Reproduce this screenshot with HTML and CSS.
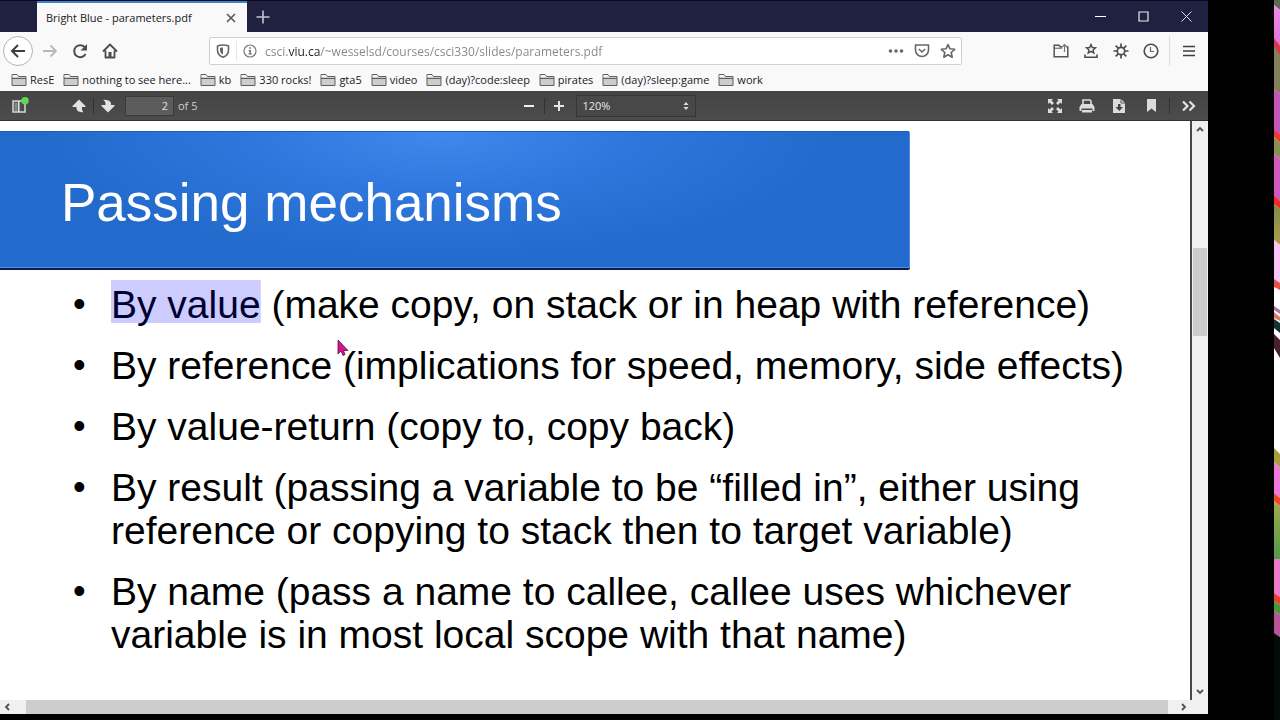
FILE: index.html
```html
<!DOCTYPE html>
<html lang="en">
<head>
  <meta charset="UTF-8">
  <meta name="viewport" content="width=device-width, initial-scale=1">
  <title>Bright Blue - parameters.pdf</title>
  <link rel="stylesheet" href="styles.css">
</head>
<body>
  <!-- Shared icons -->
  <svg class="sprite" width="0" height="0">
    <symbol id="folder" viewBox="0 0 16 14">
      <path d="M1 12.5V1.5h5l1.5 2H15v9z" fill="#cdcdcd" stroke="#5f5f61"/>
      <path d="M1.5 2h4.3l1.4 2H1.5z" fill="#f4f4f4"/>
      <path d="M1 5.5h14" stroke="#5f5f61"/>
    </symbol>
  </svg>

  <div class="window">
    <header class="titlebar">
      <div class="tab">
        <span class="tab-title">Bright Blue - parameters.pdf</span>
        <button class="tab-close" aria-label="Close tab">
          <svg width="10" height="10" viewBox="0 0 10 10"><path d="M1 1l8 8M9 1l-8 8" stroke="#58585a" stroke-width="1.6"/></svg>
        </button>
      </div>
      <button class="new-tab" aria-label="New tab">
        <svg width="14" height="14" viewBox="0 0 14 14"><path d="M7 .5v13M.5 7h13" stroke="#c4c3d4" stroke-width="1.6"/></svg>
      </button>
      <div class="window-buttons">
        <button aria-label="Minimize"><svg width="11" height="11" viewBox="0 0 11 11"><path d="M0 5.5h11" stroke="#fff"/></svg></button>
        <button aria-label="Maximize"><svg width="11" height="11" viewBox="0 0 11 11"><path d="M1 1h9v9H1z" fill="none" stroke="#eceaf5" stroke-width="1.2"/></svg></button>
        <button aria-label="Close"><svg width="11" height="11" viewBox="0 0 11 11"><path d="M.5 .5l10 10M10.500 .5l-10 10" stroke="#dcdbe8"/></svg></button>
      </div>
    </header>

    <nav class="navbar">
      <button class="nav-btn back" aria-label="Back">
        <svg width="16" height="16" viewBox="0 0 16 16"><path d="M15 8H2M8 2L2 8l6 6" fill="none" stroke="#3e3e40" stroke-width="2"/></svg>
      </button>
      <button class="nav-btn forward" aria-label="Forward">
        <svg width="16" height="16" viewBox="0 0 16 16"><path d="M1 8h13M8.500 2.500L14 8l-5.500 5.500" fill="none" stroke="#b8b8b9" stroke-width="1.800"/></svg>
      </button>
      <button class="nav-btn" aria-label="Reload">
        <svg width="16" height="16" viewBox="0 0 16 16"><path d="M13 4.500A6 6 0 1 0 13.500 11" fill="none" stroke="#4c4c4e" stroke-width="2"/><path d="M15 1v6.500H8.500z" fill="#4c4c4e"/></svg>
      </button>
      <button class="nav-btn" aria-label="Home">
        <svg width="16" height="16" viewBox="0 0 16 16"><path d="M1 8.500L8 1.500l7 7M3.500 7.500v7h9v-7" fill="none" stroke="#4c4c4e" stroke-width="1.800" stroke-linejoin="round"/><path d="M6.500 9h3v5.500h-3z" fill="#4c4c4e"/></svg>
      </button>

      <div class="urlbar">
        <svg width="14" height="14" viewBox="0 0 14 14"><path d="M7 1c2 0 4 .3 5.500 1v4c0 3.500-2 6-5.500 7.200C3.500 12 1.500 9.500 1.500 6V2C3 1.300 5 1 7 1z" fill="none" stroke="#666" stroke-width="1.600"/><path d="M7 3.500v7C5 9.500 4 8 4 6V4c1-.4 2-.5 3-.5z" fill="#666"/></svg>
        <span class="url-divider"></span>
        <svg width="14" height="14" viewBox="0 0 14 14"><circle cx="7" cy="7" r="6" fill="none" stroke="#777" stroke-width="1.200"/><path d="M6.200 3.200h1.800v1.600H6.200zM5.500 6h2.500v3.500h1v1H5.300v-1h1V7h-.8z" fill="#777"/></svg>
        <input class="url" type="text" aria-label="Address" value="csci.viu.ca/~wesselsd/courses/csci330/slides/parameters.pdf">
        <button aria-label="Page actions"><svg width="16" height="16" viewBox="0 0 16 16"><circle cx="2.500" cy="8" r="1.800" fill="#666"/><circle cx="8" cy="8" r="1.800" fill="#666"/><circle cx="13.500" cy="8" r="1.800" fill="#666"/></svg></button>
        <button aria-label="Save to Pocket"><svg width="16" height="16" viewBox="0 0 16 16"><path d="M1.500 2h13v5a6.500 6.500 0 0 1-13 0z" fill="none" stroke="#666" stroke-width="1.600" stroke-linejoin="round"/><path d="M4.800 6L8 9l3.200-3" fill="none" stroke="#666" stroke-width="1.600"/></svg></button>
        <button aria-label="Bookmark this page"><svg width="16" height="16" viewBox="0 0 16 16"><path d="M8 1.500l2 4.300 4.700.5-3.500 3.200 1 4.700L8 11.800l-4.200 2.400 1-4.700L1.300 6.300 6 5.800z" fill="none" stroke="#666" stroke-width="1.600" stroke-linejoin="round"/></svg></button>
      </div>

      <button class="nav-btn" aria-label="Open file">
        <svg width="16" height="16" viewBox="0 0 16 16"><path d="M9 4H7.500L6 2.200H1.200v11.600h13.600V4H13.500" fill="none" stroke="#555" stroke-width="1.500"/><path d="M1 5.200h8" stroke="#555"/><path d="M11.500 9V1.500M9 4l2.500-2.500L14 4" fill="none" stroke="#777" stroke-width="1.200"/></svg>
      </button>
      <button class="nav-btn" aria-label="Bookmarks menu">
        <svg width="16" height="16" viewBox="0 0 16 16"><path d="M8 1.500l1.300 3 3.200.3-2.400 2.100.7 3.100L8 8.400 5.200 10l.7-3.100-2.400-2.100 3.200-.3z" fill="none" stroke="#4c4c4e" stroke-width="1.400"/><path d="M2 11.500v2.800h12v-2.800" fill="none" stroke="#4c4c4e" stroke-width="1.600"/></svg>
      </button>
      <button class="nav-btn" aria-label="Options">
        <svg width="16" height="16" viewBox="0 0 16 16"><circle cx="8" cy="8" r="3.700" fill="none" stroke="#4c4c4e" stroke-width="1.700"/><path d="M8 .5v3.500M8 12v3.500M.5 8H4M12 8h3.500M2.700 2.700l2.500 2.500M10.800 10.800l2.500 2.500M2.700 13.300l2.500-2.500M10.800 5.200l2.500-2.500" stroke="#4c4c4e" stroke-width="1.700"/></svg>
      </button>
      <button class="nav-btn" aria-label="History">
        <svg width="16" height="16" viewBox="0 0 16 16"><circle cx="8" cy="8" r="6.800" fill="none" stroke="#4c4c4e" stroke-width="1.600"/><path d="M7.500 4v4.500H11" fill="none" stroke="#666" stroke-width="1.200"/></svg>
      </button>
      <span class="nav-divider"></span>
      <button class="nav-btn" aria-label="Menu">
        <svg width="12" height="12" viewBox="0 0 12 12"><path d="M0 1.500h12M0 6h12M0 10.500h12" stroke="#3e3e40" stroke-width="1.500"/></svg>
      </button>
    </nav>

    <nav class="bookmarks">
      <a href="#"><svg class="folder"><use href="#folder"/></svg>ResE</a>
      <a href="#"><svg class="folder"><use href="#folder"/></svg>nothing to see here...</a>
      <a href="#"><svg class="folder"><use href="#folder"/></svg>kb</a>
      <a href="#"><svg class="folder"><use href="#folder"/></svg>330 rocks!</a>
      <a href="#"><svg class="folder"><use href="#folder"/></svg>gta5</a>
      <a href="#"><svg class="folder"><use href="#folder"/></svg>video</a>
      <a href="#"><svg class="folder"><use href="#folder"/></svg>(day)?code:sleep</a>
      <a href="#"><svg class="folder"><use href="#folder"/></svg>pirates</a>
      <a href="#"><svg class="folder"><use href="#folder"/></svg>(day)?sleep:game</a>
      <a href="#"><svg class="folder"><use href="#folder"/></svg>work</a>
    </nav>

    <!-- PDF viewer toolbar -->
    <div class="pdfbar">
      <div class="pdf-left">
        <button class="sidebar-toggle" aria-label="Toggle sidebar">
          <svg width="18" height="18" viewBox="0 0 18 18"><path d="M2 4h12v11H2z" fill="none" stroke="#d8d8d8" stroke-width="1.500"/><path d="M3.500 5.500h3v8.500h-3z" fill="#8c8c8c"/><path d="M7.800 4v11" stroke="#e8e8e8" stroke-width="1.500"/><circle cx="14" cy="3.800" r="3.800" fill="#5fd94f"/></svg>
        </button>
        <button aria-label="Previous page">
          <svg width="14" height="14" viewBox="0 0 14 14"><path d="M7 .5L13.500 7v1H10v2q0 2 1.500 3.200Q5 13.500 4.500 9.500V8H.5V7z" fill="#e2e2e2"/></svg>
        </button>
        <span class="pdf-divider"></span>
        <button aria-label="Next page">
          <svg width="14" height="14" viewBox="0 0 14 14"><path d="M7 13.500L.5 7V6H4.500V4.500Q4.500 2 2 .8 9.500 .5 10 4.500V6h3.500v1z" fill="#e2e2e2"/></svg>
        </button>
        <input class="page-number" type="text" id="pageNumber" value="2">
        <label class="page-count" for="pageNumber">of 5</label>
      </div>
      <div class="pdf-middle">
        <button class="zoom-out" aria-label="Zoom out">
          <svg width="10" height="10" viewBox="0 0 10 10"><path d="M0 5h10" stroke="#f0f0f0" stroke-width="2"/></svg>
        </button>
        <span class="pdf-divider"></span>
        <button aria-label="Zoom in">
          <svg width="10" height="10" viewBox="0 0 10 10"><path d="M0 5h10M5 0v10" stroke="#e6e6e6" stroke-width="2"/></svg>
        </button>
        <div class="scale">
          <select aria-label="Zoom">
            <option>120%</option>
          </select>
          <svg width="6" height="10" viewBox="0 0 6 10"><path d="M3 1l2.500 3h-5zM3 9L.5 6h5z" fill="#e0e0e0"/></svg>
        </div>
      </div>
      <div class="pdf-right">
        <button aria-label="Presentation mode">
          <svg width="14" height="14" viewBox="0 0 14 14"><path d="M0 0h5L3.500 1.500l2.500 2.500-2 2L1.500 3.500 0 5zM14 0v5l-1.500-1.500L10 6 8 4l2.500-2.500L9 0zM0 14V9l1.500 1.500L4 8l2 2-2.500 2.500L5 14zM14 14H9l1.500-1.500L8 10l2-2 2.500 2.500L14 9z" fill="#dcdcdc"/></svg>
        </button>
        <button aria-label="Print">
          <svg width="16" height="14" viewBox="0 0 16 14"><path d="M4 5V1h7l1 1v3" fill="none" stroke="#dcdcdc" stroke-width="1.600"/><path d="M2.500 5h11L15.500 8v4h-2V9.500h-11V12h-2V8z" fill="#dcdcdc"/><path d="M3 11h10v2.500H3z" fill="#dcdcdc"/></svg>
        </button>
        <button aria-label="Download">
          <svg width="12" height="14" viewBox="0 0 12 14"><path d="M0 0h8l4 4v10H0z" fill="#dcdcdc"/><path d="M8 0v4h4" fill="none" stroke="#555"/><path d="M5 5h2.500v3H10l-3.700 4L2.500 8H5z" fill="#444"/></svg>
        </button>
        <button aria-label="Bookmark view">
          <svg width="9" height="13" viewBox="0 0 9 13"><path d="M0 0h9v13L4.500 9.500 0 13z" fill="#dcdcdc"/></svg>
        </button>
        <span class="pdf-divider"></span>
        <button class="tools" aria-label="Tools">
          <svg width="14" height="12" viewBox="0 0 14 12"><path d="M1 1.500L5.500 6 1 10.500M7.500 1.500L12 6l-4.500 4.500" fill="none" stroke="#e2e2e2" stroke-width="2.200"/></svg>
        </button>
      </div>
    </div>

    <div class="viewer">
      <div class="viewer-main">
        <main class="slide">
          <h1>Passing mechanisms</h1>
          <ul>
            <li><mark>By value</mark> (make copy, on stack or in heap with reference)</li>
            <li>By reference (implications for speed, memory, side effects)</li>
            <li>By value-return (copy to, copy back)</li>
            <li>By result (passing a variable to be “filled in”, either using reference or copying to stack then to target variable)</li>
            <li>By name (pass a name to callee, callee uses whichever variable is in most local scope with that name)</li>
          </ul>
          <svg class="cursor" width="12" height="18" viewBox="0 0 12 18"><path d="M1 1v14l3-3 2 4.500 2-1L6.500 11.500H11z" fill="#d4148c" stroke="#5c1040" stroke-width=".8"/></svg>
        </main>
        <div class="scroll-y">
          <svg width="8" height="6" viewBox="0 0 8 6"><path d="M1 5l3-3 3 3" fill="none" stroke="#505050" stroke-width="1.800"/></svg>
          <div class="track-y"><div class="thumb-y"></div></div>
          <svg width="8" height="6" viewBox="0 0 8 6"><path d="M1 1l3 3 3-3" fill="none" stroke="#505050" stroke-width="1.800"/></svg>
        </div>
      </div>
      <div class="scroll-x">
        <svg width="6" height="8" viewBox="0 0 6 8"><path d="M5 1L2 4l3 3" fill="none" stroke="#505050" stroke-width="1.800"/></svg>
        <div class="thumb-x"></div>
        <svg width="6" height="8" viewBox="0 0 6 8"><path d="M1 1l3 3-3 3" fill="none" stroke="#505050" stroke-width="1.800"/></svg>
      </div>
    </div>
  </div>

  <!-- Sliver of desktop wallpaper -->
  <svg class="wallpaper" viewBox="0 0 6 720" preserveAspectRatio="none">
    <defs>
      <linearGradient id="pink" x1="0" y1="0" x2="0" y2="1"><stop offset="0" stop-color="#ef8cec"/><stop offset="1" stop-color="#dd70d8"/></linearGradient>
      <linearGradient id="olive" x1="0" y1="0" x2="0" y2="1"><stop offset="0" stop-color="#7c8c4c"/><stop offset="1" stop-color="#b09c48"/></linearGradient>
      <linearGradient id="green" x1="0" y1="0" x2="0" y2="1"><stop offset="0" stop-color="#a4a850"/><stop offset="1" stop-color="#509a48"/></linearGradient>
    </defs>
    <path d="M0 0h6v720H0z" fill="#fff"/>
    <path d="M0 0h6v10L0 5z" fill="#5c6c4c"/>
    <path d="M0 5l6 5v42l-6-8z" fill="url(#pink)"/>
    <path d="M0 38l6 8v11l-6-7z" fill="#d83848"/>
    <path d="M0 46l6 9v39l-6-5z" fill="#84805a"/>
    <path d="M0 89l6 5v44l-6-7z" fill="#c456b8"/>
    <path d="M0 130l6 5v8l-6-6z" fill="#ee3a26"/>
    <path d="M0 137l6 6v16l-6-5z" fill="#869050"/>
    <path d="M0 154l6 5v42l-6-4z" fill="#d058c0"/>
    <path d="M0 196l6 5v8l-6-5z" fill="#f02c1c"/>
    <path d="M0 204l6 5v36l-6-5z" fill="url(#olive)"/>
    <path d="M0 240l6 5v38l-6-4z" fill="#fbc4f6"/>
    <path d="M0 279l6 4v7l-6-3z" fill="#e85440"/>
    <path d="M0 306l6 4v4l-6-4z" fill="#ac78ae"/>
    <path d="M0 312l6 5v4l-6-3z" fill="#e07c60"/>
    <path d="M0 319l6 4v10l-6-5z" fill="#183038"/>
    <path d="M0 334l6 6v18l-6-10z" fill="#482030"/>
    <path d="M0 448l6 6v14l-6-6z" fill="#ac9c3c"/>
    <path d="M0 462l6 6v30l-6-5z" fill="#ee7adc"/>
    <path d="M0 493l6 5v8l-6-5z" fill="#f04424"/>
    <path d="M0 501l6 5v53H0z" fill="url(#green)"/>
    <path d="M0 559h6v38l-6-4z" fill="#ee7acc"/>
    <path d="M0 593l6 4v8l-6-4z" fill="#ee3e2c"/>
    <path d="M0 601l6 4v10l-6-4z" fill="#48983c"/>
    <path d="M0 611l6 4v22l-6-4z" fill="#b85498"/>
    <path d="M0 633l6 4v83H0z" fill="#050c08"/>
  </svg>
</body>
</html>
```
FILE: styles.css
```css
/* Reset & Basic Styling */
* {
  box-sizing: border-box;
  margin: 0;
  padding: 0;
}
body {
  font-family: "Open Sans", "Noto Sans", sans-serif;
  font-size: 11px;
  background: #000;
  display: flex;
  gap: 66px;
  height: 100vh;
  overflow: hidden;
}
.sprite {
  position: absolute;
}
button {
  display: flex;
  align-items: center;
  justify-content: center;
  background: none;
  border: none;
}
.window {
  flex: 1;
  min-width: 0;
  display: flex;
  flex-direction: column;
  padding-bottom: 6px;
}
.wallpaper {
  width: 6px;
  height: 100%;
}

/* Title bar */
.titlebar {
  display: flex;
  height: 32px;
  padding-left: 37px;
  background: #202040;
  border-top: 1px solid #080820;
}
.tab {
  display: flex;
  align-items: center;
  width: 210px;
  padding: 0 9px;
  background: #f9f9fa;
  border-top: 2px solid #3c84cc;
  color: #202022;
}
.tab-title {
  flex: 1;
  white-space: nowrap;
}
.tab-close {
  width: 14px;
  height: 14px;
}
.new-tab {
  width: 32px;
}
.window-buttons {
  display: flex;
  margin-left: auto;
}
.window-buttons button {
  width: 43px;
}

/* Navigation bar */
.navbar {
  display: flex;
  align-items: center;
  height: 38px;
  padding: 0 4px 0 3px;
  background: #f9f9fa;
}
.nav-btn {
  width: 30px;
  height: 30px;
}
.back {
  margin-right: 2px;
  border: 1px solid #b4b4b5;
  border-radius: 50%;
  background: #fff;
}
.urlbar {
  flex: 1;
  display: flex;
  align-items: center;
  height: 28px;
  margin: 0 84px;
  padding: 0 0 0 6px;
  border: 1px solid #cfcfcf;
  border-radius: 2px;
  background: #fff;
}
.url-divider {
  width: 1px;
  height: 20px;
  margin: 0 6px;
  background: #e6e6e6;
}
.url {
  flex: 1;
  min-width: 0;
  margin-left: 8px;
  border: none;
  outline: none;
  font-family: inherit;
  font-size: 12px;
  color: #858585;
  /* host name is drawn darker than the rest of the address */
  background: linear-gradient(to right, #858585 23px, #202020 23px, #202020 55px, #858585 55px);
  -webkit-background-clip: text;
  background-clip: text;
  -webkit-text-fill-color: transparent;
}
.urlbar button {
  width: 26px;
  height: 26px;
}
.nav-divider {
  width: 1px;
  height: 30px;
  margin: 0 4px 0 3px;
  background: #dededf;
}

/* Bookmarks */
.bookmarks {
  display: flex;
  gap: 9px;
  height: 21px;
  padding: 0 11px;
  background: #f9f9fa;
}
.bookmarks a {
  display: flex;
  align-items: center;
  gap: 3px;
  height: 19px;
  color: #202022;
  text-decoration: none;
  white-space: nowrap;
}
.folder {
  width: 16px;
  height: 14px;
}

/* PDF toolbar */
.pdfbar {
  display: flex;
  height: 30px;
  background: linear-gradient(#444, #4c4c4c);
  border-bottom: 1px solid #333;
  color: #d0d0d0;
}
.pdf-left,
.pdf-middle,
.pdf-right {
  display: flex;
  align-items: center;
}
.pdf-left,
.pdf-right {
  flex: 1;
}
.pdf-left {
  padding-left: 4px;
}
.pdf-middle {
  padding-left: 2px;
}
.pdf-right {
  justify-content: flex-end;
  padding-right: 5px;
}
.pdfbar button {
  width: 28px;
  height: 24px;
}
.pdfbar .sidebar-toggle {
  width: 32px;
  margin-right: 29px;
}
.pdfbar .zoom-out {
  width: 30px;
}
.pdf-right button {
  margin: 0 2px;
}
.pdf-right .pdf-divider {
  margin-left: 2px;
}
.pdf-right .tools {
  margin: 0 0 0 5px;
}
.pdf-divider {
  width: 1px;
  height: 16px;
  background: #333;
}
.page-number {
  width: 49px;
  height: 20px;
  margin: 0 4px 0 3px;
  padding: 0 5px;
  border: 1px solid #3a3a3a;
  background: #5c5c5c;
  font: inherit;
  color: #e0e0e0;
  text-align: right;
}
.scale {
  display: flex;
  align-items: center;
  width: 120px;
  height: 22px;
  margin-left: 3px;
  padding: 0 6px;
  border: 1px solid #363636;
  background: #484848;
}
.scale select {
  flex: 1;
  appearance: none;
  border: none;
  background: none;
  font: inherit;
  color: #e8e8e8;
}

/* Viewer */
.viewer {
  flex: 1;
  min-height: 0;
  display: flex;
  flex-direction: column;
}
.viewer-main {
  flex: 1;
  min-height: 0;
  display: flex;
}
.slide {
  position: relative;
  flex: 1;
  padding-top: 10px;
  background: #fff;
  border-right: 2px solid #484848;
  font-family: "Liberation Sans", Arial, sans-serif;
  color: #000;
}
.slide h1 {
  margin-right: 280px;
  padding: 42px 61px 35px;
  border: 1px solid #2258b8;
  border-left: none;
  border-right-color: #4c88e4;
  border-bottom-color: #4c8cec;
  border-radius: 0 2px 2px 0;
  box-shadow: 0 2px 0 #0c1c48;
  background: radial-gradient(ellipse 400px 130px at 440px 0, #4088ec, #2f76dc 50%, #226acb);
  font-size: 53px;
  font-weight: normal;
  line-height: 58px;
  color: #fff;
}
.slide ul {
  display: flex;
  flex-direction: column;
  gap: 18px;
  padding: 15px 50px 0 111px;
  list-style: none;
  font-size: 39px;
  line-height: 43px;
}
.slide li::before {
  content: "•";
  float: left;
  margin-left: -38px;
  font-size: 36px;
  line-height: 41px;
}
.slide mark {
  padding-top: 3px;
  background: linear-gradient(#ccccff, #ccccff) no-repeat top / 100% 43px;
  color: #000030;
}
.cursor {
  position: absolute;
  left: 337px;
  top: 218px;
}

/* Scrollbars */
.scroll-y {
  display: flex;
  flex-direction: column;
  align-items: center;
  width: 16px;
  padding: 5px 0;
  background: #f0f0f0;
}
.track-y {
  flex: 1;
  width: 100%;
  padding: 116px 1px 0;
}
.thumb-y {
  height: 88px;
  background: #cdcdcd;
}
.scroll-x {
  display: flex;
  align-items: center;
  gap: 13px;
  height: 14px;
  padding: 0 21px 0 4px;
  background: #f0f0f0;
}
.thumb-x {
  flex: 1;
  height: 14px;
  margin-left: 3px;
  background: #cdcdcd;
}
```
